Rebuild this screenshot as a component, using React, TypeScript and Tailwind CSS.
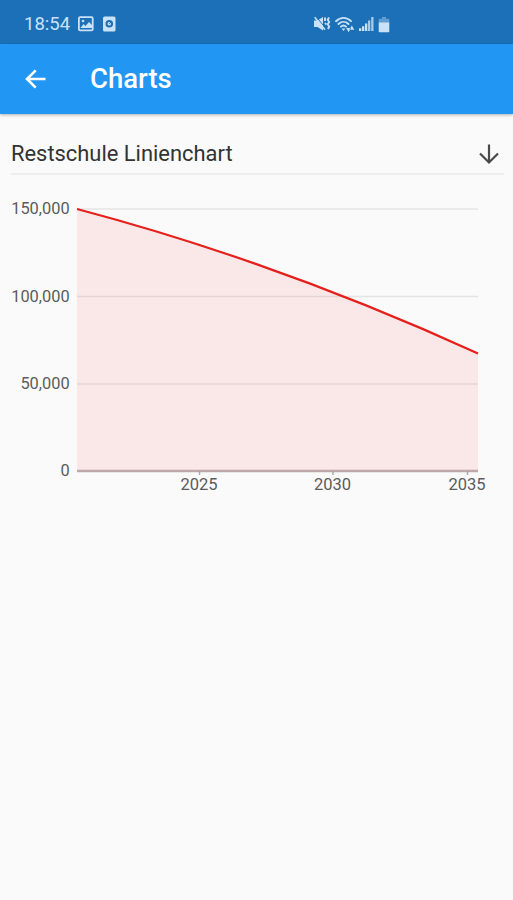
// App.tsx
const Y_TICKS = [
  { label: "150,000", y: 34 },
  { label: "100,000", y: 121.5 },
  { label: "50,000", y: 209 },
  { label: "0", y: 296 },
];

const X_TICKS = [
  { label: "2025", x: 199.5 },
  { label: "2030", x: 333 },
  { label: "2035", x: 467.5 },
];

function StatusBar() {
  return (
    <div className="flex h-11 items-center bg-[#1b70b8] pl-6 pt-1 text-[#c9e2f7]">
      <span className="w-[54px] text-[18.5px] leading-none">18:54</span>
      <svg width="16" height="16" viewBox="0 0 16 16" fill="none">
        <rect x="0.9" y="1.2" width="13.8" height="13.2" rx="1.2" stroke="currentColor" strokeWidth="1.8" />
        <path d="M2.5 12l3-4 2 2L11 6l3 3v3z" fill="currentColor" />
        <circle cx="5" cy="5" r="1.3" fill="currentColor" />
      </svg>
      <svg className="ml-[9px]" width="14" height="16" viewBox="0 0 14 16" fill="none">
        <rect x="0" y="0.5" width="12.5" height="15" rx="1.5" fill="currentColor" />
        <circle cx="6.3" cy="7.7" r="2.8" stroke="#1b70b8" strokeWidth="2" />
        <path d="M6.3 7.7l1.8-1.6" stroke="#1b70b8" strokeWidth="1" />
      </svg>

      <div className="ml-auto mr-[123px] flex items-center">
        {/* muted, vibrate */}
        <svg width="18" height="16" viewBox="0 0 18 16" fill="none" stroke="currentColor">
          <path d="M0 4.5h3.5L9 1v13.5L3.5 11H0z" fill="currentColor" stroke="none" />
          <path d="M2.2 0.8l7.5 9" stroke="#1b70b8" strokeWidth="1" />
          <path d="M0.7 1.2l10.3 12.5" strokeWidth="1.5" />
          <path d="M11 1.5v3.5M11 7l1.2 1.5M15 1.5l-1.3 2.3 1.5 2.2-1.5 2.3 1.5 2.2-1.2 2.5" strokeWidth="1.9" />
        </svg>
        <svg className="ml-[3px]" width="20" height="17" viewBox="0 0 20 17" fill="none" stroke="currentColor" strokeLinecap="round">
          <path d="M1 5.2c4.6-4.5 10.5-4.5 15 0M3.5 8c3-2.9 7-2.9 10 0M5.9 10.6c1.6-1.5 3.6-1.5 5.2 0" strokeWidth="1.9" />
          <path d="M6.6 12.5h3.8l-1.9 2.5z" fill="currentColor" stroke="none" />
          <path d="M11.2 12h4.8l-2.4 4.2zM14.3 13.8h5l-2.5-4.2z" fill="currentColor" stroke="none" />
        </svg>
        <svg className="ml-1" width="16" height="16" viewBox="0 0 16 16" fill="currentColor">
          <path d="M0 12.3h2.3V15H0zM3 10.2h2.3V15H3zM6 7.5h2.3V15H6z" />
          <path d="M9 4.5h2.3V15H9zM12.2 1h2.3v14h-2.3z" opacity="0.8" />
        </svg>
        <svg className="ml-[3px]" width="12" height="17" viewBox="0 0 12 17" fill="currentColor">
          <path d="M4 1h4v1.8h2.3q1 0 1 1V7H.7V3.8q0-1 1-1H4z" opacity="0.4" />
          <path d="M.7 6.5h10.6v8.7q0 1-1 1H1.7q-1 0-1-1z" />
        </svg>
      </div>
    </div>
  );
}

function AppBar() {
  return (
    <header className="flex h-[70px] items-center bg-[#2196f3] pl-[25px] text-white shadow-[0_1px_3px_rgba(0,0,0,0.3)]">
      <svg width="22" height="22" viewBox="0 0 22 22" fill="none" stroke="currentColor" strokeWidth="2.6">
        <path d="M20.5 11H2.5M10.7 2.3L2 11l8.7 8.7" />
      </svg>
      <h1 className="ml-[43px] text-[27.5px] font-medium leading-none">Charts</h1>
    </header>
  );
}

function LineChart() {
  return (
    <svg className="block" width="513" height="330" viewBox="0 0 513 330">
      {Y_TICKS.map((t) => (
        <g key={t.label}>
          <text x="69.7" y={t.y + 5} textAnchor="end" fontSize="16.4" fill="#5c5c5c">
            {t.label}
          </text>
          {t.label !== "0" && <path d={`M77 ${t.y}H478`} stroke="#e4e4e4" strokeWidth="1.7" />}
        </g>
      ))}
      <path d="M77 296H478" stroke="#b8b4b4" strokeWidth="2.4" />
      {X_TICKS.map((t) => (
        <g key={t.label}>
          <path d={`M${t.x} 296v4`} stroke="#aaa" strokeWidth="1.5" />
          <text x={t.x - 0.5} y="315" textAnchor="middle" fontSize="16.5" fill="#5c5c5c">
            {t.label}
          </text>
        </g>
      ))}
      <path d="M77 34Q277.5 87 478 178.5V297H77z" fill="#ff4444" fillOpacity="0.1" />
      <path d="M77 34Q277.5 87 478 178.5" fill="none" stroke="#e5201b" strokeWidth="2.2" />
    </svg>
  );
}

export default function App() {
  return (
    <div className="flex h-[900px] w-[513px] flex-col overflow-hidden bg-[#fafafa] font-['Roboto',sans-serif]">
      <StatusBar />
      <AppBar />
      <main>
        <div className="ml-[11px] mr-[9px] mt-5 flex h-[41px] items-center justify-between border-b-2 border-[#eeeeee]">
          <h2 className="text-[21.9px] leading-none text-[#333]">Restschule Linienchart</h2>
          <svg className="mr-1" width="22" height="22" viewBox="0 0 22 22" fill="none" stroke="#4a4a4a" strokeWidth="2.2">
            <path d="M11 1.5V19M2 10.5l9 9 9-9" />
          </svg>
        </div>
        <LineChart />
      </main>
    </div>
  );
}
